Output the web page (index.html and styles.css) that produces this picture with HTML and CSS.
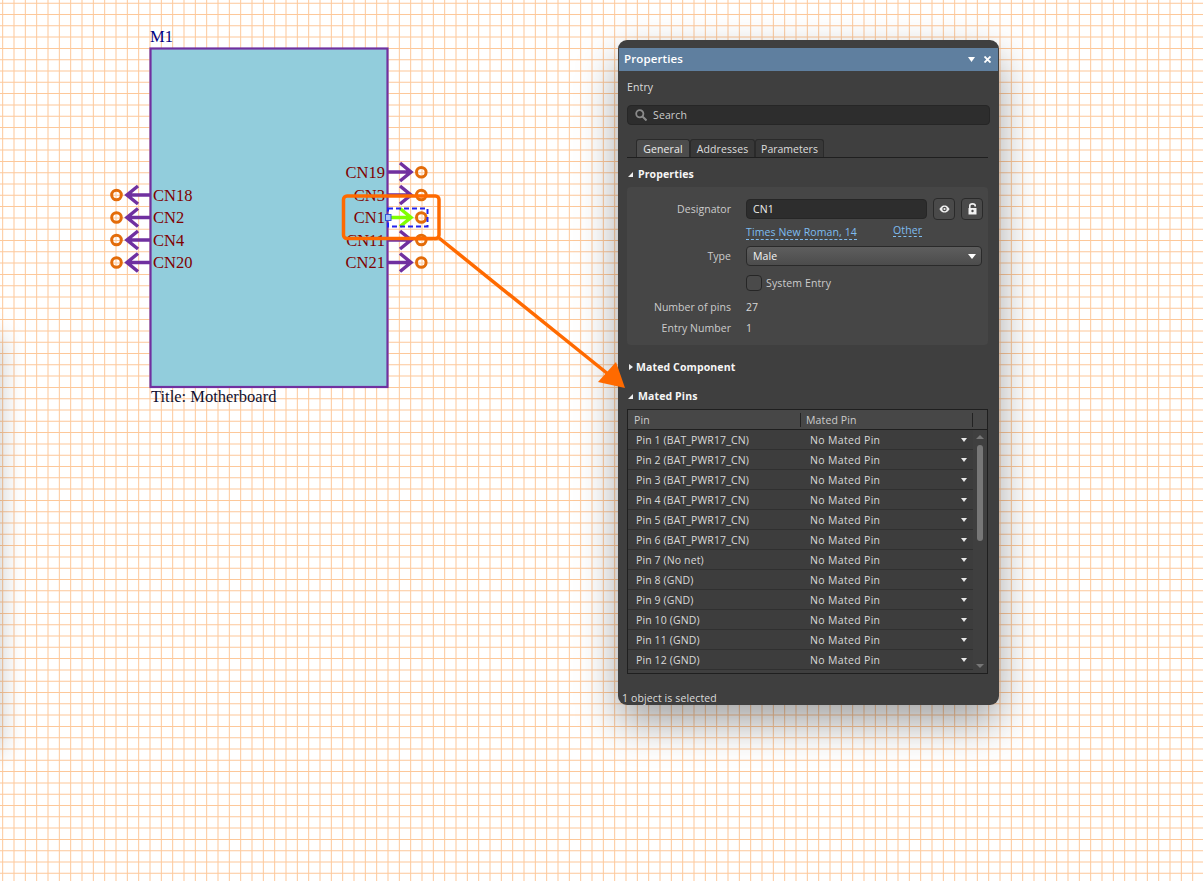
FILE: index.html
```html
<!DOCTYPE html>
<html lang="en">
<head>
<meta charset="utf-8">
<title>Properties</title>
<link rel="stylesheet" href="styles.css">
</head>
<body>
<main class="canvas">
  <svg class="schematic" width="1203" height="881" viewBox="0 0 1203 881">
    <defs>
      <pattern id="grid" patternUnits="userSpaceOnUse" width="34" height="113">
        <path class="grid-line" d="M2.170 0h1v113h-1zM13.500 0h1v113h-1zM24.830 0h1v113h-1z"/>
        <path class="grid-line" d="M0 2.700h34v1h-34zM0 14h34v1h-34zM0 25.300h34v1h-34zM0 36.600h34v1h-34zM0 47.900h34v1h-34zM0 59.200h34v1h-34zM0 70.500h34v1h-34zM0 81.800h34v1h-34zM0 93.100h34v1h-34zM0 104.400h34v1h-34z"/>
      </pattern>
    </defs>
    <rect class="grid" width="1203" height="881"/>
    <rect class="block" x="150.500" y="48.500" width="237" height="338.500"/>
    <text class="ref" x="150" y="42">M1</text>
    <text class="title" x="151" y="402">Title: Motherboard</text>

    <g class="pin"><path d="M388 172H411M400 163l11 9l-11 9"/></g>
    <g class="pin"><path d="M388 195H411M400 186l11 9l-11 9"/></g>
    <g class="pin"><path d="M388 240H411M400 231l11 9l-11 9"/></g>
    <g class="pin"><path d="M388 262.500H411M400 253.500l11 9l-11 9"/></g>
    <g class="pin"><path d="M150 195H127M138 186l-11 9l11 9"/></g>
    <g class="pin"><path d="M150 217.500H127M138 208.500l-11 9l11 9"/></g>
    <g class="pin"><path d="M150 240H127M138 231l-11 9l11 9"/></g>
    <g class="pin"><path d="M150 262.500H127M138 253.500l-11 9l11 9"/></g>
    <circle class="pad" cx="421.300" cy="172.300" r="4.800"/>
    <circle class="pad" cx="421.300" cy="195" r="4.800"/>
    <circle class="pad" cx="421.300" cy="217.500" r="4.800"/>
    <circle class="pad" cx="421.300" cy="240" r="4.800"/>
    <circle class="pad" cx="421.300" cy="262.500" r="4.800"/>
    <circle class="pad" cx="116.500" cy="195" r="4.800"/>
    <circle class="pad" cx="116.500" cy="217.500" r="4.800"/>
    <circle class="pad" cx="116.500" cy="240" r="4.800"/>
    <circle class="pad" cx="116.500" cy="262.500" r="4.800"/>

    <text class="net end" x="385" y="178">CN19</text>
    <text class="net end" x="385" y="201">CN3</text>
    <text class="net end" x="385" y="223">CN1</text>
    <text class="net end" x="385" y="246">CN11</text>
    <text class="net end" x="385" y="268">CN21</text>
    <text class="net" x="153" y="201">CN18</text>
    <text class="net" x="153" y="223">CN2</text>
    <text class="net" x="153" y="246">CN4</text>
    <text class="net" x="153" y="268">CN20</text>

    <path class="selected-pin" d="M391 217.500H411M400 208.500l11 9l-11 9"/>
    <rect class="selection" x="388" y="208.500" width="39.500" height="18"/>
    <rect class="handle" x="385.500" y="214.500" width="5.500" height="6"/>
  </svg>
  <div class="side-shadow"></div>

  <section class="panel">
    <header class="panel-title">
      <span class="panel-name">Properties</span>
      <span class="panel-controls">
        <svg width="7" height="5" viewBox="0 0 7 5"><path d="M0 0H7L3.500 5Z" fill="#fff"/></svg>
        <svg width="7" height="7" viewBox="0 0 7 7"><path d="M0.500 0.500L6.500 6.500M6.500 0.500L0.500 6.500" stroke="#fff" stroke-width="1.800"/></svg>
      </span>
    </header>
    <div class="panel-body">
      <div class="kind">Entry</div>
      <div class="search">
        <svg width="12" height="12" viewBox="0 0 12 12"><circle cx="4.800" cy="4.800" r="3.600" fill="none" stroke="#8a8a8a" stroke-width="1.800"/><path d="M7.500 7.500L11.500 11.500" stroke="#8a8a8a" stroke-width="2"/></svg>
        <span>Search</span>
      </div>
      <nav class="tabs">
        <span class="tab tab-general active">General</span>
        <span class="tab tab-addresses">Addresses</span>
        <span class="tab tab-parameters">Parameters</span>
      </nav>
      <h2 class="section-head first"><i class="tri open"></i>Properties</h2>
      <div class="props">
        <div class="row designator">
          <label class="lbl">Designator</label>
          <div class="input">CN1</div>
          <button class="icon-btn" aria-label="Visible">
            <svg width="11" height="8" viewBox="0 0 14 10"><path d="M0.500 5C3 1 5 0.500 7 0.500S11 1 13.500 5C11 9 9 9.500 7 9.500S3 9 0.500 5Z" fill="#eee"/><circle cx="7" cy="5" r="2.800" fill="#4a4a4a"/><circle cx="7" cy="5" r="1.400" fill="#eee"/></svg>
          </button>
          <button class="icon-btn" aria-label="Unlocked">
            <svg width="9" height="12" viewBox="0 0 9 12"><path d="M1.800 5V2.800C1.800 0.200 7.200 0.200 7.200 2.800V3.600" fill="none" stroke="#f2f2f2" stroke-width="1.600"/><path d="M0.500 5H8.500V11.500H0.500Z" fill="#f2f2f2"/><circle cx="4.500" cy="8" r="1.200" fill="#4a4a4a"/></svg>
          </button>
        </div>
        <div class="font-row">
          <a class="link">Times New Roman, 14</a>
          <a class="link other">Other</a>
        </div>
        <div class="row type">
          <label class="lbl">Type</label>
          <div class="select">Male<i class="caret"></i></div>
        </div>
        <div class="check-row">
          <i class="check"></i><span>System Entry</span>
        </div>
        <div class="row info first-info"><label class="lbl">Number of pins</label><span>27</span></div>
        <div class="row info"><label class="lbl">Entry Number</label><span>1</span></div>
      </div>
      <h2 class="section-head mated"><i class="tri closed"></i>Mated Component</h2>
      <h2 class="section-head pins"><i class="tri open"></i>Mated Pins</h2>
      <div class="table">
        <div class="thead">
          <span class="th th-pin">Pin</span>
          <span class="th th-mated">Mated Pin</span>
        </div>
        <div class="tbody">
          <div class="rows">
            <div class="tr"><span class="td-pin">Pin 1 (BAT_PWR17_CN)</span><span class="td-mated">No Mated Pin</span><i class="mini"></i></div>
            <div class="tr"><span class="td-pin">Pin 2 (BAT_PWR17_CN)</span><span class="td-mated">No Mated Pin</span><i class="mini"></i></div>
            <div class="tr"><span class="td-pin">Pin 3 (BAT_PWR17_CN)</span><span class="td-mated">No Mated Pin</span><i class="mini"></i></div>
            <div class="tr"><span class="td-pin">Pin 4 (BAT_PWR17_CN)</span><span class="td-mated">No Mated Pin</span><i class="mini"></i></div>
            <div class="tr"><span class="td-pin">Pin 5 (BAT_PWR17_CN)</span><span class="td-mated">No Mated Pin</span><i class="mini"></i></div>
            <div class="tr"><span class="td-pin">Pin 6 (BAT_PWR17_CN)</span><span class="td-mated">No Mated Pin</span><i class="mini"></i></div>
            <div class="tr"><span class="td-pin">Pin 7 (No net)</span><span class="td-mated">No Mated Pin</span><i class="mini"></i></div>
            <div class="tr"><span class="td-pin">Pin 8 (GND)</span><span class="td-mated">No Mated Pin</span><i class="mini"></i></div>
            <div class="tr"><span class="td-pin">Pin 9 (GND)</span><span class="td-mated">No Mated Pin</span><i class="mini"></i></div>
            <div class="tr"><span class="td-pin">Pin 10 (GND)</span><span class="td-mated">No Mated Pin</span><i class="mini"></i></div>
            <div class="tr"><span class="td-pin">Pin 11 (GND)</span><span class="td-mated">No Mated Pin</span><i class="mini"></i></div>
            <div class="tr"><span class="td-pin">Pin 12 (GND)</span><span class="td-mated">No Mated Pin</span><i class="mini"></i></div>
          </div>
          <div class="scrollbar">
            <i class="sb-up"></i>
            <i class="sb-thumb"></i>
            <i class="sb-down"></i>
          </div>
        </div>
      </div>
    </div>
    <footer class="status">1 object is selected</footer>
  </section>

  <svg class="annotation" width="1203" height="881" viewBox="0 0 1203 881">
    <rect class="callout" x="343.500" y="196" width="95.500" height="42.500" rx="3.500"/>
    <path class="callout" d="M439 238L608 374"/>
    <path class="callout-head" d="M625 388L598 382L616 362Z"/>
  </svg>
</main>
</body>
</html>
```

FILE: styles.css
```css
* { box-sizing: border-box; }
html, body { margin: 0; padding: 0; height: 100%; overflow: hidden; background: #fff; }

.canvas {
  position: relative;
  width: 1203px;
  height: 881px;
  overflow: hidden;
  background-color: #fff;
  font-family: "Open Sans", "Noto Sans", sans-serif;
}

.side-shadow {
  position: absolute;
  left: -30px;
  top: 330px;
  width: 30px;
  height: 415px;
  box-shadow: 0 6px 26px rgba(0, 0, 0, 0.22);
}

.schematic, .annotation { position: absolute; left: 0; top: 0; display: block; }
.annotation { pointer-events: none; }
.grid { fill: url(#grid); }
.grid-line { fill: #fdc89a; }
.block { fill: #92cddc; stroke: #7030a0; stroke-width: 2.200; }
.ref, .title, .net { font-family: "Liberation Serif", serif; font-size: 16.500px; }
.ref { fill: #000080; }
.title { fill: #101030; }
.net { fill: #800000; }
.end { text-anchor: end; }
.pin path { fill: none; stroke: #7030a0; stroke-width: 3.500; }
.pad { fill: none; stroke: #e36c0a; stroke-width: 3; }
.selected-pin { fill: none; stroke: #7fff00; stroke-width: 3.500; }
.selection { fill: none; stroke: #2222ee; stroke-width: 2; stroke-dasharray: 5 3; }
.handle { fill: #a9c6f5; stroke: #3355dd; stroke-width: 1; }
.callout { fill: none; stroke: #ff6a00; stroke-width: 3.500; }
.callout-head { fill: #ff6a00; }

.panel {
  position: absolute;
  left: 618px;
  top: 40px;
  width: 381px;
  height: 665px;
  padding-top: 8px;
  display: flex;
  flex-direction: column;
  background: #3f3f3f;
  border-radius: 9px;
  box-shadow: 0 18px 40px rgba(0, 0, 0, 0.36);
  color: #dcdcdc;
  font-size: 10.500px;
  line-height: 14px;
  letter-spacing: 0.120px;
}

.panel-title {
  height: 23px;
  margin: 0 1px;
  padding: 0 7px 2px 5px;
  display: flex;
  align-items: center;
  justify-content: space-between;
  background: #5f7f9f;
  color: #fff;
  font-size: 11.500px;
  font-weight: 600;
}
.panel-controls { display: flex; align-items: center; gap: 9px; padding-top: 2px; }
.panel-controls svg { display: block; }

.panel-body { flex: 1; padding: 0 11px 0 9px; position: relative; }
.kind { margin-top: 9px; height: 14px; }

.search {
  margin: 11px -2px 0 0;
  height: 20px;
  display: flex;
  align-items: center;
  gap: 6px;
  padding-left: 7px;
  background: #2d2d2d;
  border: 1px solid #262626;
  border-radius: 4px;
  color: #cccccc;
}
.search svg { flex: none; }

.tabs {
  margin-top: 14px;
  height: 19px;
  padding-left: 9px;
  display: flex;
  border-bottom: 1px solid #1f1f1f;
}
.tab {
  padding-top: 2px;
  height: 18px;
  text-align: center;
  background: #383838;
  border: 1px solid #2a2a2a;
  border-bottom: 0;
  border-radius: 3px 3px 0 0;
  color: #dedede;
}
.tab-general { width: 54px; }
.tab-addresses { width: 65px; }
.tab-parameters { width: 69px; letter-spacing: 0; }
.tab.active { background: #4c4c4c; color: #ececec; }

.section-head {
  margin: 0;
  height: 14px;
  display: flex;
  align-items: center;
  color: #f6f6f6;
  font-size: 10.500px;
  font-weight: 700;
  line-height: 14px;
}
.section-head.first { margin-top: 9px; }
.section-head.mated { margin-top: 15px; }
.section-head.pins { margin-top: 15px; }
.tri { display: block; width: 0; height: 0; margin-right: 5px; }
.tri.open { border-left: 5px solid transparent; border-bottom: 5px solid #eee; margin-left: 1px; }
.tri.closed { border-left: 4px solid #eee; border-top: 3.500px solid transparent; border-bottom: 3.500px solid transparent; margin-left: 2px; margin-right: 3px; }

.props {
  margin-top: 6px;
  height: 158px;
  padding: 11px 0 0 0;
  background: #464646;
  border-radius: 4px;
}
.row { display: flex; align-items: center; }
.lbl { width: 104px; margin-right: 15px; text-align: right; color: #cccccc; flex: none; letter-spacing: 0.040px; }
.designator { height: 22px; }
.input {
  width: 181px;
  height: 20px;
  padding-left: 6px;
  background: #2d2d2d;
  border: 1px solid #262626;
  border-radius: 4px;
  line-height: 18px;
  color: #ececec;
}
.icon-btn {
  width: 22px;
  height: 22px;
  margin-left: 6px;
  padding: 0;
  display: flex;
  align-items: center;
  justify-content: center;
  background: #4a4a4a;
  border: 1px solid #2a2a2a;
  border-radius: 4px;
}
.font-row { position: relative; height: 16px; padding-left: 119px; margin-top: 5px; }
.link {
  color: #7fbdf0;
  display: inline-block;
  height: 14px;
  line-height: 13px;
  border-bottom: 1px dashed #7fbdf0;
}
.link.other { position: absolute; left: 266px; top: -1px; height: 13px; }
.type { height: 20px; margin-top: 5px; }
.select {
  position: relative;
  width: 236px;
  height: 20px;
  padding-left: 6px;
  line-height: 18px;
  background: linear-gradient(#5e5e5e, #4c4c4c);
  border: 1px solid #2a2a2a;
  border-radius: 4px;
  color: #f4f4f4;
}
.caret {
  position: absolute;
  right: 5px;
  top: 7px;
  width: 0;
  height: 0;
  border-left: 4px solid transparent;
  border-right: 4px solid transparent;
  border-top: 5px solid #fff;
}
.check-row { display: flex; align-items: center; height: 16px; margin-top: 9px; padding-left: 119px; color: #cccccc; }
.check { width: 16px; height: 16px; margin-right: 4px; background: #4a4a4a; border: 1px solid #262626; border-radius: 4px; }
.info { height: 14px; color: #d8d8d8; }
.first-info { margin-top: 9px; margin-bottom: 7px; }

.table {
  margin-top: 6px;
  height: 265px;
  background: #3f3f3f;
  border: 1px solid #1f1f1f;
}
.thead {
  height: 20px;
  display: flex;
  align-items: center;
  background: #474747;
  border-bottom: 1px solid #1f1f1f;
  color: #cccccc;
}
.th { height: 14px; line-height: 14px; padding-left: 6px; }
.th-pin { width: 172px; }
.th-mated { width: 173px; padding-left: 5px; border-left: 1px solid #222; border-right: 1px solid #222; }
.tbody { display: flex; height: 243px; }
.rows { width: 345px; }
.tr {
  position: relative;
  height: 20px;
  display: flex;
  align-items: center;
  background: #3d3d3d;
  border-bottom: 1px solid #303030;
}
.td-pin { width: 182px; padding-left: 8px; color: #dadada; }
.td-mated { color: #dadada; letter-spacing: 0.330px; }
.mini {
  position: absolute;
  right: 6px;
  top: 8px;
  width: 0;
  height: 0;
  border-left: 3.500px solid transparent;
  border-right: 3.500px solid transparent;
  border-top: 4px solid #e8e8e8;
}
.scrollbar { position: relative; flex: 1; background: #3f3f3f; }
.sb-up, .sb-down {
  position: absolute;
  left: 3px;
  width: 0;
  height: 0;
  border-left: 4px solid transparent;
  border-right: 4px solid transparent;
}
.sb-up { top: 5px; border-bottom: 4px solid #777; }
.sb-down { top: 234px; border-top: 4px solid #777; }
.sb-thumb { position: absolute; left: 4px; top: 15px; width: 6px; height: 96px; background: #777; border-radius: 3px; }

.status { height: 14px; padding-left: 4px; color: #dcdcdc; line-height: 14px; }
```
